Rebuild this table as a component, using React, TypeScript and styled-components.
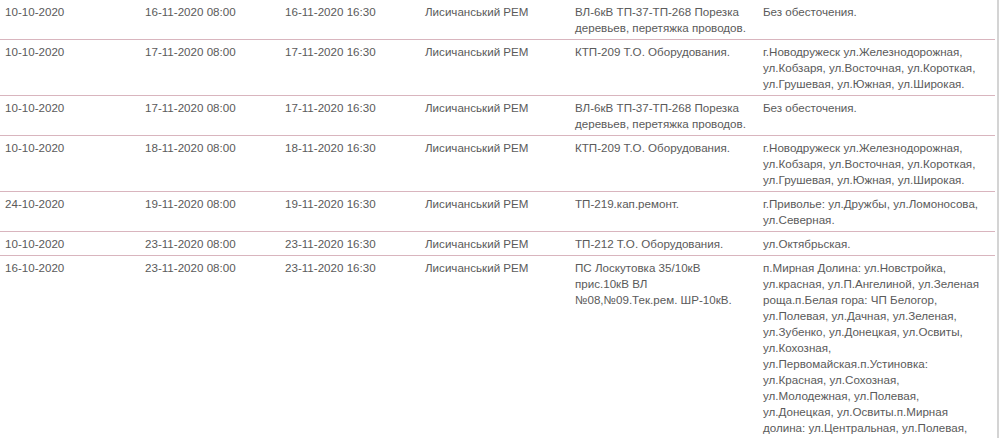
import React from "react";
import styled, { createGlobalStyle } from "styled-components";

const Global = createGlobalStyle`
  html, body {
    margin: 0;
    padding: 0;
    overflow: hidden;
    background: #ffffff;
  }
  #root {
    width: 1000px;
    height: 438px;
    overflow: hidden;
  }
`;

const Page = styled.div`
  display: flex;
  width: 1000px;
  height: 438px;
  background: #fff;
`;

const Table = styled.div`
  width: 995px;
  display: flex;
  flex-direction: column;
`;

const Edge = styled.div`
  margin-left: 2px;
  width: 2px;
  background: #d4d4d4;
`;

const Row = styled.div<{ $last?: boolean }>`
  display: grid;
  grid-template-columns: 140px 140px 140px 150px 188px 1fr;
  padding: 4px 0 3px;
  border-bottom: ${(p) => (p.$last ? "none" : "1px solid #d9b5be")};
`;

const Cell = styled.div`
  padding-left: 5px;
  font-family: "Liberation Sans", Arial, sans-serif;
  font-size: 11.6px;
  line-height: 16px;
  color: #5a5a5a;
  white-space: nowrap;
`;

type RowData = {
  created: string;
  start: string;
  end: string;
  rem: string;
  work: string[];
  addr: string[];
};

const VL = ["ВЛ-6кВ ТП-37-ТП-268 Порезка", "деревьев, перетяжка проводов."];
const KTP = ["КТП-209 Т.О. Оборудования."];
const NOVO = [
  "г.Новодружеск ул.Железнодорожная,",
  "ул.Кобзаря, ул.Восточная, ул.Короткая,",
  "ул.Грушевая, ул.Южная, ул.Широкая.",
];

const rows: RowData[] = [
  { created: "10-10-2020", start: "16-11-2020 08:00", end: "16-11-2020 16:30", rem: "Лисичанський РЕМ", work: VL, addr: ["Без обесточения."] },
  { created: "10-10-2020", start: "17-11-2020 08:00", end: "17-11-2020 16:30", rem: "Лисичанський РЕМ", work: KTP, addr: NOVO },
  { created: "10-10-2020", start: "17-11-2020 08:00", end: "17-11-2020 16:30", rem: "Лисичанський РЕМ", work: VL, addr: ["Без обесточения."] },
  { created: "10-10-2020", start: "18-11-2020 08:00", end: "18-11-2020 16:30", rem: "Лисичанський РЕМ", work: KTP, addr: NOVO },
  {
    created: "24-10-2020",
    start: "19-11-2020 08:00",
    end: "19-11-2020 16:30",
    rem: "Лисичанський РЕМ",
    work: ["ТП-219.кап.ремонт."],
    addr: ["г.Приволье: ул.Дружбы, ул.Ломоносова,", "ул.Северная."],
  },
  {
    created: "10-10-2020",
    start: "23-11-2020 08:00",
    end: "23-11-2020 16:30",
    rem: "Лисичанський РЕМ",
    work: ["ТП-212 Т.О. Оборудования."],
    addr: ["ул.Октябрьская."],
  },
  {
    created: "16-10-2020",
    start: "23-11-2020 08:00",
    end: "23-11-2020 16:30",
    rem: "Лисичанський РЕМ",
    work: ["ПС Лоскутовка 35/10кВ", "прис.10кВ ВЛ", "№08,№09.Тек.рем. ШР-10кВ."],
    addr: [
      "п.Мирная Долина: ул.Новстройка,",
      "ул.красная, ул.П.Ангелиной, ул.Зеленая",
      "роща.п.Белая гора: ЧП Белогор,",
      "ул.Полевая, ул.Дачная, ул.Зеленая,",
      "ул.Зубенко, ул.Донецкая, ул.Освиты,",
      "ул.Кохозная,",
      "ул.Первомайская.п.Устиновка:",
      "ул.Красная, ул.Сохозная,",
      "ул.Молодежная, ул.Полевая,",
      "ул.Донецкая, ул.Освиты.п.Мирная",
      "долина: ул.Центральная, ул.Полевая,",
    ],
  },
];

const Lines: React.FC<{ lines: string[] }> = ({ lines }) => (
  <>
    {lines.map((l, i) => (
      <React.Fragment key={i}>
        {i > 0 && <br />}
        {l}
      </React.Fragment>
    ))}
  </>
);

export default function App() {
  return (
    <>
      <Global />
      <Page>
        <Table>
          {rows.map((r, i) => (
            <Row key={i} $last={i === rows.length - 1}>
              <Cell>{r.created}</Cell>
              <Cell>{r.start}</Cell>
              <Cell>{r.end}</Cell>
              <Cell>{r.rem}</Cell>
              <Cell>
                <Lines lines={r.work} />
              </Cell>
              <Cell>
                <Lines lines={r.addr} />
              </Cell>
            </Row>
          ))}
        </Table>
        <Edge />
      </Page>
    </>
  );
}
